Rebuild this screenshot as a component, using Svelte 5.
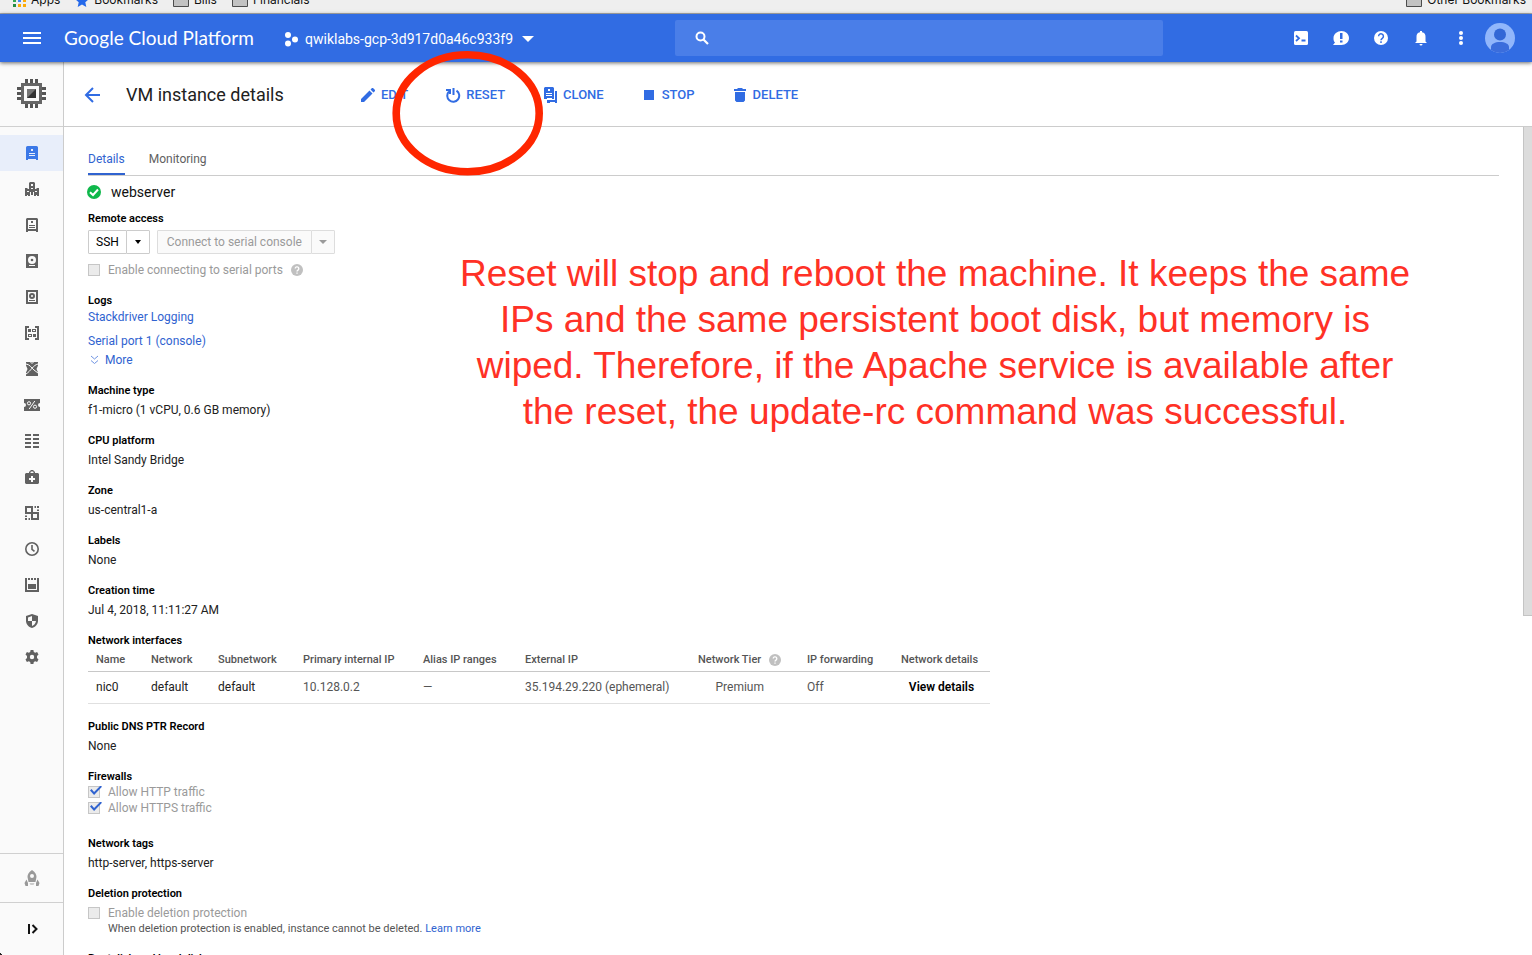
<script>
  const bookmarks = [
    { label: 'Bookmarks', icon: 'star' },
    { label: 'Bills', icon: 'folder' },
    { label: 'Financials', icon: 'folder' }
  ];

  const navItems = [
    'VM instances', 'Instance groups', 'Instance templates', 'Disks', 'Snapshots',
    'Images', 'TPUs', 'Committed use discounts', 'Metadata', 'Health checks',
    'Zones', 'Operations', 'Quotas', 'Security scans', 'Settings'
  ];

  const fields = [
    { label: 'Machine type', value: 'f1-micro (1 vCPU, 0.6 GB memory)' },
    { label: 'CPU platform', value: 'Intel Sandy Bridge' },
    { label: 'Zone', value: 'us-central1-a' },
    { label: 'Labels', value: 'None' },
    { label: 'Creation time', value: 'Jul 4, 2018, 11:11:27 AM' }
  ];

  const columns = [55, 67, 85, 120, 102, 173, 109, 94, 97];
</script>

{#snippet help()}
  <svg class="help" viewBox="0 0 12 12" width="12" height="12" aria-hidden="true">
    <circle cx="6" cy="6" r="6" fill="#c0c0c0" />
    <path d="M4.2 4.6a1.8 1.8 0 1 1 2.8 1.5c-.7.5-1 .7-1 1.4M6 8.4v1.3" fill="none" stroke="#fff" stroke-width="1.3" />
  </svg>
{/snippet}

{#snippet folder()}
  <svg viewBox="0 0 16 14" width="16" height="14" aria-hidden="true">
    <path d="M.5 1.5h6l1 2h8v10H.5z" fill="#c2c2c2" stroke="#4c4c4c" />
  </svg>
{/snippet}

{#snippet navIcon(i)}
  <svg viewBox="0 0 16 16" width="16" height="16" fill="currentColor" aria-hidden="true">
    {#if i === 0}
      <path fill-rule="evenodd" d="M3.500 1h9A1.500 1.500 0 0 1 14 2.500V15h-2v-1H4v1H2V2.500A1.500 1.500 0 0 1 3.500 1zM7 4v2h2V4zM5 8v1h6V8zM5 10v1h6v-1z" />
    {:else if i === 1}
      <path fill-rule="evenodd" d="M6 1h4l1 1v6h1.500V7H15v8h-2v-1h-1v1h-2v-4H9v3H7v-3H6v4H4v-1H3v1H1V7h2.500v1H5V2zM7 3v2h2V3zM7 7v1h2V7zM3 10v1h2v-1zM11 10v1h2v-1z" />
    {:else if i === 2}
      <path fill-rule="evenodd" d="M3 1h10l1 1v13h-2v-1H4v1H2V2zM4 3v9h8V3zM7 4h2v2H7zM5 8h6v1H5zM5 10h6v1H5z" />
    {:else if i === 3}
      <path fill-rule="evenodd" d="M2 1h12v14H2zM8 3a4 4 0 1 0 0 8 4 4 0 0 0 0-8zM5 12v1h6v-1z" />
      <circle cx="8" cy="7" r="1.300" />
    {:else if i === 4}
      <path fill-rule="evenodd" d="M2 1h12v14H2zM4 3v10h8V3zM5 11h6v1H5z" />
      <path fill-rule="evenodd" d="M8 4a3 3 0 1 1 0 6 3 3 0 0 1 0-6zM8 6a1 1 0 1 0 0 2 1 1 0 0 0 0-2z" />
    {:else if i === 5}
      <path fill-rule="evenodd" d="M1 1h4v2H3v10h2v2H1zM11 1h4v14h-4v-2h2V3h-2zM4 4h3v3H4zM8 4h4v3H8zM9 5v1h2V5zM4 9h4v3H4zM5 10v1h2v-1zM9 9h3v3H9z" />
    {:else if i === 6}
      <path d="M2 1h12v3.500L12.500 8l1.500 3.500V15H2v-3.500L3.500 8 2 4.500z" />
      <path d="M2 3c4 .500 5 3.500 8 6l4 3M14 3C9 4 7 10 2 13" fill="none" stroke="#fafafa" />
      <path d="m6.500 1 1.500 1.500L9.500 1" fill="none" stroke="#fafafa" />
    {:else if i === 7}
      <path d="M0 2h16v4a2 2 0 0 0 0 4v4H0v-4a2 2 0 0 0 0-4z" />
      <g fill="none" stroke="#fafafa"><circle cx="5" cy="6.300" r="1.600" /><circle cx="11" cy="9.700" r="1.600" /><path d="m10.800 4-5.600 8" /></g>
    {:else if i === 8}
      <path d="M1 1h6v2H1zM9 1h6v2H9zM1 5h6v2H1zM9 5h6v2H9zM1 9h6v2H1zM9 9h6v2H9zM1 13h6v2H1zM9 13h6v2H9z" />
    {:else if i === 9}
      <path fill-rule="evenodd" d="M5 4V3l2-2h2l2 2v1h3l1 1v9l-1 1H2l-1-1V5l1-1zM6.500 4h3V3l-.500-.500H7L6.500 3zM7 7v2H5v2h2v2h2v-2h2V9H9V7z" />
    {:else if i === 10}
      <path fill-rule="evenodd" d="M1 1h8v6h6v8H7V9H1zM3 3v4h4V3zM9 9v4h4V9zM10.500 1h1.500v2h-1.500zM13 1h2v2h-2zM13 4.500h2V6h-2zM1 10.500h2V12H1zM1 13h2v2H1zM4.500 13H6v2H4.500z" />
    {:else if i === 11}
      <circle cx="8" cy="8" r="6.200" fill="none" stroke="currentColor" stroke-width="1.600" />
      <path d="M8 4v4.300l2.500 2" fill="none" stroke="currentColor" stroke-width="1.600" />
    {:else if i === 12}
      <path d="M1 1h2v12h10V1h2v14H1zM4 1h2v2H4zM7 1h2v2H7zM10 1h2v2h-2zM4 7h8v5H4z" />
    {:else if i === 13}
      <path fill-rule="evenodd" d="M8 1l6 2v5c0 3-2.500 6-6 7-3.500-1-6-4-6-7V3zM8 3 4 4.500V8h4zM8 8v5c2-.700 3.600-2.500 4-5z" />
    {:else}
      <path fill-rule="evenodd" d="M6.600 1h2.800l.400 2 1.400.800 1.900-.700 1.400 2.400L13 6.900v2.200l1.500 1.400-1.400 2.400-1.900-.700-1.400.800-.400 2H6.600l-.400-2-1.400-.800-1.900.700-1.400-2.400L3 9.100V6.900L1.500 5.500l1.400-2.400 1.900.700L6.200 3zM8 5.800a2.200 2.200 0 1 0 0 4.400 2.200 2.200 0 0 0 0-4.400z" />
    {/if}
  </svg>
{/snippet}

<div class="page">
  <nav class="bookmarks" aria-label="Bookmarks">
    <a href="#apps">
      <svg viewBox="0 0 13 13" width="13" height="13" aria-hidden="true">
        <path d="M0 0h3v3H0z" fill="#ea4335" /><path d="M5 0h3v3H5zM10 0h3v3h-3z" fill="#ea4335" />
        <path d="M0 5h3v3H0z" fill="#34a853" /><path d="M5 5h3v3H5z" fill="#4285f4" /><path d="M10 5h3v3h-3z" fill="#fbab09" />
        <path d="M0 10h3v3H0z" fill="#238b45" /><path d="M5 10h3v3H5zM10 10h3v3h-3z" fill="#fbab09" />
      </svg>
      Apps
    </a>
    {#each bookmarks as b}
      <a href="#{b.label}">
        {#if b.icon === 'star'}
          <svg viewBox="0 0 14 13" width="14" height="13" aria-hidden="true">
            <path d="m7 0 2 4.500 5 .500-3.700 3.300L11.300 13 7 10.500 2.700 13l1-4.700L0 5l5-.500z" fill="#2468ea" />
          </svg>
        {:else}
          {@render folder()}
        {/if}
        {b.label}
      </a>
    {/each}
    <a class="other" href="#other">{@render folder()} Other Bookmarks</a>
  </nav>

  <header>
    <button class="menu" aria-label="Main menu">
      <svg viewBox="0 0 18 12" width="18" height="12"><path d="M0 0h18v2H0zM0 5h18v2H0zM0 10h18v2H0z" fill="#fff" /></svg>
    </button>
    <a class="brand" href="#home">Google Cloud Platform</a>
    <button class="project">
      <svg viewBox="0 0 14 16" width="14" height="16" fill="#fff" aria-hidden="true">
        <circle cx="4" cy="4" r="3" /><circle cx="4" cy="12.500" r="3" /><circle cx="11" cy="8.500" r="3" />
      </svg>
      <span>qwiklabs-gcp-3d917d0a46c933f9</span>
      <svg viewBox="0 0 12 6" width="12" height="6" aria-hidden="true"><path d="M0 0h12L6 6z" fill="#fff" /></svg>
    </button>
    <label class="search">
      <svg viewBox="0 0 14 14" width="14" height="14" aria-hidden="true">
        <circle cx="5.500" cy="5.500" r="4" fill="none" stroke="#fff" stroke-width="2" /><path d="m8.500 8.500 4.500 4.500" stroke="#fff" stroke-width="2.200" />
      </svg>
      <input type="search" aria-label="Search products and resources" />
    </label>
    <div class="tools">
      <button aria-label="Cloud Shell">
        <svg viewBox="0 0 16 16" width="16" height="16"><rect x="1" y="1" width="14" height="14" rx="1.500" fill="#fff" /><path d="M3 5.500 6 8.300 3 11M8.500 10.500h4" fill="none" stroke="#316ce3" stroke-width="1.800" /></svg>
      </button>
      <button aria-label="Send feedback">
        <svg viewBox="0 0 16 16" width="16" height="16"><path d="M8.500 1C12.600 1 16 4 16 8s-3.400 7-7.500 7H0l2-2.500C.500 11 .500 9.500.500 8 .500 4 4.400 1 8.500 1z" fill="#fff" /><path d="M7 3h2.500v6H7zM7 10.500h2.500v2H7z" fill="#316ce3" /></svg>
      </button>
      <button aria-label="Help">
        <svg viewBox="0 0 16 16" width="16" height="16"><circle cx="8" cy="8" r="7" fill="#fff" /><path d="M5.600 6.300a2.400 2.400 0 1 1 3.700 2C8.400 9 8 9.300 8 10.200M8 11.300V13" fill="none" stroke="#316ce3" stroke-width="1.500" /></svg>
      </button>
      <button aria-label="Notifications">
        <svg viewBox="0 0 16 16" width="16" height="16" fill="#fff"><path d="M7 1h2v1.300A4.500 4.500 0 0 1 12.500 7v4.500L14 13H2l1.500-1.500V7A4.500 4.500 0 0 1 7 2.300zM6.500 14h3a1.500 1.500 0 0 1-3 0z" /></svg>
      </button>
      <button aria-label="More options">
        <svg viewBox="0 0 16 16" width="16" height="16" fill="#fff"><circle cx="8" cy="3" r="2" /><circle cx="8" cy="8" r="2" /><circle cx="8" cy="13" r="2" /></svg>
      </button>
      <button class="avatar" aria-label="Account">
        <svg viewBox="0 0 30 30" width="30" height="30"><circle cx="15" cy="15" r="15" fill="#91b6fb" /><circle cx="15" cy="11.500" r="6" fill="#3367d6" /><path d="M6 27v-3c0-3 4-5 9-5s9 2 9 5v3a15 15 0 0 1-18 0z" fill="#3b6ddc" /></svg>
      </button>
    </div>
  </header>

  <div class="shell">
    <aside>
      <a class="product" href="#compute" aria-label="Compute Engine">
        <svg viewBox="0 0 29 29" width="29" height="29" aria-hidden="true">
          <path d="M8 0h3v4H8zM13 0h3v4h-3zM18 0h3v4h-3zM8 25h3v4H8zM13 25h3v4h-3zM18 25h3v4h-3zM0 8h4v3H0zM0 13h4v3H0zM0 18h4v3H0zM25 8h4v3h-4zM25 13h4v3h-4zM25 18h4v3h-4z" fill="#555" />
          <path fill-rule="evenodd" d="M4 4h21v21H4zM7 7v15h15V7z" fill="#666" />
          <path d="M10 10h9v9h-9z" fill="#757575" /><path d="M19 10v9h-9z" fill="#333" />
        </svg>
      </a>
      <nav class="side" aria-label="Compute Engine">
        {#each navItems as item, i}
          <a href="#{i}" class:active={i === 0} aria-label={item}>{@render navIcon(i)}</a>
        {/each}
      </nav>
      <a class="launcher" href="#launcher" aria-label="Marketplace">
        <svg viewBox="0 0 16 16" width="16" height="16" fill="#999" aria-hidden="true">
          <path fill-rule="evenodd" d="M8 0c3.500 2 4.500 5 4.500 7l-1 5h-7l-1-5C3.500 5 4.500 2 8 0zM8 4a2 2 0 1 0 0 4 2 2 0 0 0 0-4z" />
          <path d="M2.500 9.500 4 13v3H1.500L.500 13zM13.500 9.500 12 13v3h2.500l1-3z" /><path d="M5.500 13h5l-1 2h-3z" fill="#ccc" />
        </svg>
      </a>
      <button class="expand" aria-label="Expand navigation">
        <svg viewBox="0 0 12 10" width="12" height="10" aria-hidden="true"><path d="M3 0v10M6.500 1l4 4-4 4" fill="none" stroke="#111" stroke-width="2" /></svg>
      </button>
    </aside>

    <main>
      <div class="toolbar">
        <a class="back" href="#back" aria-label="Back to VM instances">
          <svg viewBox="0 0 16 16" width="16" height="16" aria-hidden="true"><path d="M16 8H2M9 1 2 8l7 7" fill="none" stroke="#316ce3" stroke-width="2" /></svg>
        </a>
        <h1>VM instance details</h1>
        <div class="actions">
          <button>
            <svg viewBox="0 0 16 16" width="16" height="16"><path d="M1 12 9.500 3.500l3 3L4 15H1zM10.500 2.500 12 1h1l2 2v1l-1.500 1.500z" /></svg>
            EDIT
          </button>
          <button>
            <svg viewBox="0 0 16 16" width="16" height="16"><path d="M11.500 3.700a6 6 0 1 1-7.500.800" fill="none" stroke="currentColor" stroke-width="2" /><path d="M1 2h5v5H4V4H1zM7.500 1h2v7h-2z" /></svg>
            RESET
          </button>
          <button>
            <svg viewBox="0 0 16 16" width="16" height="16"><path fill-rule="evenodd" d="M3 0h8l1 1v11h-2v-1H5v1H2V1zM6 2v2h2V2zM4 6v1h6V6zM4 8v1h6V8zM13 4h2v12h-2v-1H8v1H5v-3h8z" /></svg>
            CLONE
          </button>
          <button>
            <svg viewBox="0 0 16 16" width="16" height="16"><path d="M3 3h10v10H3z" /></svg>
            STOP
          </button>
          <button>
            <svg viewBox="0 0 16 16" width="16" height="16"><path d="M5.500 1h5v1H14v2H2V2h3.500zM3 5h10v8.500L11.500 15h-7L3 13.500z" /></svg>
            DELETE
          </button>
        </div>
      </div>

      <div class="body">
        <div class="content">
          <nav class="tabs" aria-label="Instance views">
            <a class="current" href="#details">Details</a>
            <a href="#monitoring">Monitoring</a>
          </nav>

          <div class="status">
            <svg viewBox="0 0 14 14" width="14" height="14" aria-hidden="true"><circle cx="7" cy="7" r="7" fill="#0fb84b" /><path d="M3 7.200 6 10l5-5.500" fill="none" stroke="#fff" stroke-width="2" /></svg>
            <h2>webserver</h2>
          </div>

          <section class="remote">
            <h3>Remote access</h3>
            <div class="buttons">
              <div class="split">
                <button>SSH</button>
                <button class="caret" aria-label="SSH options"><i></i></button>
              </div>
              <div class="split">
                <button class="serial-console" disabled>Connect to serial console</button>
                <button class="caret" disabled aria-label="Serial console options"><i></i></button>
              </div>
            </div>
            <label class="check"><input type="checkbox" disabled /> Enable connecting to serial ports {@render help()}</label>
          </section>

          <section class="logs">
            <h3>Logs</h3>
            <a href="#stackdriver">Stackdriver Logging</a>
            <a class="serial" href="#serial">Serial port 1 (console)</a>
            <a class="more" href="#more">
              <svg viewBox="0 0 9 10" width="9" height="10" aria-hidden="true"><path d="m1 1 3.500 3L8 1M1 5.500l3.500 3 3.500-3" fill="none" stroke="#6f94e3" /></svg>
              More
            </a>
          </section>

          {#each fields as f}
            <section>
              <h3>{f.label}</h3>
              <p>{f.value}</p>
            </section>
          {/each}

          <section>
            <h3 id="nics">Network interfaces</h3>
            <table aria-labelledby="nics">
              <colgroup>
                {#each columns as w}<col style:width="{w}px" />{/each}
              </colgroup>
              <thead>
                <tr>
                  <th>Name</th><th>Network</th><th>Subnetwork</th><th>Primary internal IP</th>
                  <th>Alias IP ranges</th><th>External IP</th>
                  <th><span class="tier">Network Tier {@render help()}</span></th>
                  <th>IP forwarding</th><th>Network details</th>
                </tr>
              </thead>
              <tbody>
                <tr>
                  <td class="dark">nic0</td><td class="dark">default</td><td class="dark">default</td>
                  <td>10.128.0.2</td><td>—</td><td>35.194.29.220 (ephemeral)</td>
                  <td class="premium">Premium</td><td>Off</td>
                  <td class="view"><button>View details</button></td>
                </tr>
              </tbody>
            </table>
          </section>

          <section>
            <h3>Public DNS PTR Record</h3>
            <p>None</p>
          </section>

          <section class="firewalls">
            <h3>Firewalls</h3>
            <label class="check"><input type="checkbox" checked disabled /> Allow HTTP traffic</label>
            <label class="check"><input type="checkbox" checked disabled /> Allow HTTPS traffic</label>
          </section>

          <section>
            <h3>Network tags</h3>
            <p>http-server, https-server</p>
          </section>

          <section class="deletion">
            <h3>Deletion protection</h3>
            <label class="check"><input type="checkbox" disabled /> Enable deletion protection</label>
            <small>When deletion protection is enabled, instance cannot be deleted. <a href="#learn">Learn more</a></small>
          </section>

          <section>
            <h3>Boot disk and local disks</h3>
          </section>
        </div>
        <div class="scrollbar"><div class="thumb"></div></div>
      </div>
    </main>
  </div>

  <svg class="ring" viewBox="0 0 152 126" width="152" height="126" aria-hidden="true">
    <ellipse cx="75.700" cy="63.300" rx="71.500" ry="58.500" fill="none" stroke="#ff2600" stroke-width="7.600" />
  </svg>
  <p class="note">
    Reset will stop and reboot the machine. It keeps the same<br />
    IPs and the same persistent boot disk, but memory is<br />
    wiped. Therefore, if the Apache service is available after<br />
    the reset, the update-rc command was successful.
  </p>
</div>

<style>
  :global(body) { margin: 0; overflow: hidden; }
  * { box-sizing: border-box; }
  h1, h2, h3, p { margin: 0; font-weight: 400; }
  a { color: #3063d0; text-decoration: none; }
  button { margin: 0; padding: 0; border: 0; background: none; font: inherit; color: inherit; cursor: pointer; }
  svg { display: block; flex: none; }

  .page {
    position: relative;
    display: flex;
    flex-direction: column;
    height: 100vh;
    overflow: hidden;
    background: #fff;
    color: #212121;
    font: 12px/16px Roboto, sans-serif;
  }
  .page::after {
    content: '';
    position: absolute;
    left: 0;
    bottom: 0;
    width: 4px;
    height: 4px;
    background: radial-gradient(circle at 100% 0, transparent 4px, #222 4px);
  }

  .bookmarks {
    display: flex;
    align-items: flex-end;
    flex: none;
    gap: 15px;
    height: 14px;
    padding: 0 6px 0 13px;
    overflow: hidden;
    background: #efefef;
    border-bottom: 1px solid #b0b0b0;
    font-family: Inter, sans-serif;
  }
  .bookmarks a { display: flex; align-items: center; flex: none; gap: 5px; height: 26px; color: #111; }
  .bookmarks .other { margin-left: auto; }

  header {
    position: relative;
    z-index: 2;
    display: flex;
    align-items: center;
    flex: none;
    height: 48px;
    padding: 0 17px 0 23px;
    background: #316ce3;
    box-shadow: 0 1px 4px rgba(0, 0, 0, .6);
    color: #fff;
  }
  .brand { margin-left: 23px; width: 196px; color: #fff; font: 19px/24px Lato, sans-serif; white-space: nowrap; }
  .project { display: flex; align-items: center; gap: 7px; margin-left: 24px; padding-top: 2px; font-size: 14px; }
  .project span { min-width: 210px; text-align: left; }
  .search { display: flex; align-items: center; flex: 0 1 488px; gap: 12px; height: 36px; margin-left: 141px; padding: 0 20px; border-radius: 2px; background: #4a7ee8; }
  .search input { flex: 1; min-width: 0; border: 0; outline: 0; background: none; color: #fff; font: inherit; }
  .tools { display: flex; align-items: center; gap: 24px; margin-left: auto; }
  .tools .avatar { margin-left: -8px; }

  .shell { display: flex; flex: 1; min-height: 0; }
  aside { display: flex; flex-direction: column; flex: none; width: 64px; background: #fafafa; border-right: 1px solid #ccc; }
  aside > a, aside > button { display: flex; align-items: center; justify-content: center; flex: none; }
  .product { height: 65px; padding-bottom: 2px; border-bottom: 1px solid #d0d0d0; }
  .side { flex: 1; min-height: 0; padding-top: 8px; overflow: hidden; }
  .side a { display: flex; align-items: center; justify-content: center; height: 36px; color: #616161; }
  .side .active { background: #e8eefa; color: #3b78e7; }
  .launcher { height: 50px; border: solid #d0d0d0; border-width: 1px 0; }
  .expand { height: 52px; }

  main { display: flex; flex-direction: column; flex: 1; min-width: 0; }
  .toolbar { display: flex; align-items: center; flex: none; height: 65px; padding: 1px 0 0 20px; border-bottom: 1px solid #ccc; }
  h1 { width: 234px; margin-left: 26px; font-size: 18px; line-height: 24px; white-space: nowrap; }
  .actions { display: flex; gap: 37px; padding-top: 1px; color: #316ce3; font-size: 13px; font-weight: 500; }
  .actions button { display: flex; align-items: center; gap: 5px; }
  .actions svg { fill: currentColor; }

  .body { display: flex; flex: 1; min-height: 0; }
  .content { flex: 1; min-width: 0; padding: 0 24px; overflow: hidden; }
  .scrollbar { flex: none; width: 9px; }
  .thumb { height: 59%; background: #dcdcdc; border-left: 1px solid #c4c4c4; border-bottom: 1px solid #c4c4c4; }

  .tabs { display: flex; gap: 24px; height: 49px; border-bottom: 1px solid #ccc; }
  .tabs a { height: 48px; padding-top: 24px; color: #616161; }
  .tabs .current { color: #3063d0; border-bottom: 2px solid #3063d0; }

  .status { display: flex; align-items: center; gap: 10px; height: 32px; margin-left: -1px; }
  h2 { font-size: 14px; color: #111; }

  h3 { height: 16px; font-size: 11px; line-height: 18px; font-weight: 600; color: #000; }
  section { margin-bottom: 14px; }
  section p { margin-top: 4px; }
  .remote { margin: 2px 0 14px; }
  .buttons { display: flex; gap: 7px; margin: 4px 0 8px; }
  .split { display: flex; height: 24px; color: #000; }
  .split button { padding: 0 7px; border: 1px solid #ccc; border-radius: 1px; background: #fff; }
  .split .serial-console { padding: 0 9px; }
  .split .caret { width: 24px; margin-left: -1px; padding: 0 8px; }
  .split button:disabled { border-color: #ddd; background: #fafafa; color: #9a9a9a; cursor: default; }
  .caret i { display: block; border: solid transparent; border-width: 4px 3px 0; border-top-color: currentColor; }
  .caret:disabled i { border-left-width: 4px; border-right-width: 4px; margin: 0 -1px; }

  .check { display: flex; align-items: center; gap: 8px; height: 16px; color: #9a9a9a; }
  .check input { position: relative; appearance: none; width: 12px; height: 12px; margin: 0; border: 1px solid #c6c6c6; background: #ebebeb; }
  .check input:checked::after {
    content: '';
    position: absolute;
    left: 1px;
    top: -1px;
    width: 12px;
    height: 10px;
    background: #3063d0;
    clip-path: polygon(0 50%, 13% 35%, 34% 64%, 88% 0, 100% 12%, 34% 96%);
  }

  .logs { display: flex; flex-direction: column; align-items: flex-start; gap: 1px; }
  .logs .serial { margin-top: 7px; }
  .logs .more { display: flex; align-items: center; gap: 6px; margin-top: 2px; padding-left: 2px; }

  table { width: 902px; border-collapse: collapse; table-layout: fixed; color: #555; }
  th, td { padding: 0 8px; text-align: left; white-space: nowrap; }
  th { height: 23px; padding-top: 2px; border-bottom: 1px solid #c8c8c8; font-size: 11px; font-weight: 500; }
  td { height: 32px; border-bottom: 1px solid #e0e0e0; }
  td.dark { color: #212121; }
  td.premium { padding-right: 35px; text-align: right; }
  td.view { padding: 0; color: #000; font-weight: 600; text-align: center; }
  .tier { display: flex; align-items: center; gap: 8px; }

  .firewalls { margin-bottom: 19px; }
  .deletion { margin-bottom: 13px; }
  .deletion h3 { margin-bottom: 4px; }
  small { display: block; margin-left: 20px; font-size: 11px; color: #555; }

  .ring { position: absolute; left: 392px; top: 50px; z-index: 3; pointer-events: none; }
  .note {
    position: absolute;
    left: 435px;
    top: 251px;
    width: 1000px;
    color: #ff3126;
    font: 37px/46px "Liberation Sans", Arial, sans-serif;
    text-align: center;
    white-space: nowrap;
  }
</style>
